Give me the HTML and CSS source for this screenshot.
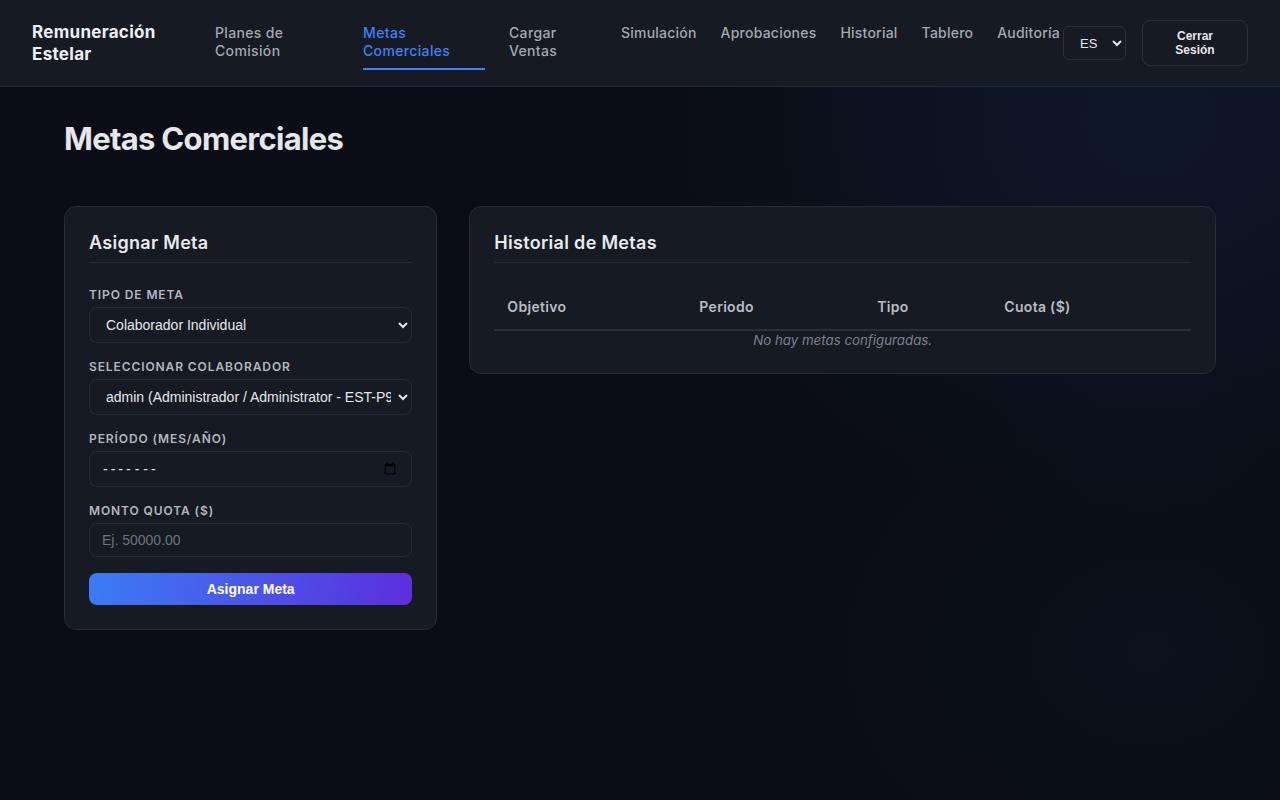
FILE: index.html
```html
<!DOCTYPE html>
<html lang="es">
<head>
<meta charset="utf-8">
<title>Metas Comerciales</title>
<link rel="stylesheet" href="styles.css">
</head>
<body>
<header class="topbar">
  <div class="brand">Remuneración Estelar</div>
  <nav class="nav">
    <a class="nav-link nl-planes">Planes de Comisión</a>
    <a class="nav-link nl-metas active">Metas Comerciales</a>
    <a class="nav-link nl-cargar">Cargar Ventas</a>
    <a class="nav-link">Simulación</a>
    <a class="nav-link">Aprobaciones</a>
    <a class="nav-link">Historial</a>
    <a class="nav-link">Tablero</a>
    <a class="nav-link">Auditoría</a>
  </nav>
  <div class="actions">
    <select class="lang"><option>ES</option><option>EN</option></select>
    <button class="logout">Cerrar Sesión</button>
  </div>
</header>
<main class="page">
  <h1 class="page-title">Metas Comerciales</h1>
  <div class="grid">
    <section class="card">
      <h2 class="card-title">Asignar Meta</h2>
      <form class="form">
        <div class="field">
          <label class="label">Tipo de Meta</label>
          <select class="control"><option>Colaborador Individual</option></select>
        </div>
        <div class="field">
          <label class="label">Seleccionar Colaborador</label>
          <select class="control"><option>admin (Administrador / Administrator - EST-P93)</option></select>
        </div>
        <div class="field">
          <label class="label">Período (Mes/Año)</label>
          <input class="control date" type="month">
        </div>
        <div class="field">
          <label class="label">Monto Quota ($)</label>
          <input class="control text" type="text" placeholder="Ej. 50000.00">
        </div>
        <button type="button" class="submit">Asignar Meta</button>
      </form>
    </section>
    <section class="card card-wide">
      <h2 class="card-title">Historial de Metas</h2>
      <table class="table">
        <thead>
          <tr><th class="c1">Objetivo</th><th class="c2">Periodo</th><th class="c3">Tipo</th><th class="c4">Cuota ($)</th></tr>
        </thead>
        <tbody>
          <tr><td class="empty" colspan="4">No hay metas configuradas.</td></tr>
        </tbody>
      </table>
    </section>
  </div>
</main>
</body>
</html>
```
FILE: styles.css
```css
* { box-sizing: border-box; }
html, body { height: 100%; }
body {
  margin: 0;
  font-family: Inter, "Noto Sans", sans-serif;
  color: #e5e7eb;
  background-color: #0a0d15;
  background-image:
    radial-gradient(ellipse 700px 600px at 1150px 120px, rgba(30, 58, 120, 0.22), rgba(10, 13, 21, 0) 70%),
    radial-gradient(ellipse 500px 400px at 1150px 650px, rgba(30, 50, 100, 0.10), rgba(10, 13, 21, 0) 70%);
  min-height: 800px;
}

.topbar {
  height: 87px;
  display: flex;
  align-items: center;
  padding: 0 32px;
  background: #161a23;
  border-bottom: 1px solid #242a35;
}
.brand {
  width: 140px;
  flex-shrink: 0;
  margin-right: 43px;
  font-size: 17px;
  font-weight: 700;
  line-height: 22px;
  color: #eef0f4;
  letter-spacing: 0.3px;
}
.nav {
  flex: 1;
  display: flex;
  gap: 24px;
  align-self: stretch;
  align-items: flex-start;
  padding-top: 24px;
  min-width: 0;
}
.nav-link {
  flex-shrink: 0;
  font-size: 14px;
  font-weight: 500;
  line-height: 18px;
  letter-spacing: 0.22px;
  color: #a3a8b3;
  white-space: nowrap;
  padding-bottom: 8px;
  border-bottom: 2px solid transparent;
  cursor: pointer;
}
.nl-planes, .nl-metas, .nl-cargar { white-space: normal; letter-spacing: 0.35px; }
.nl-planes { width: 124px; }
.nl-metas { width: 122px; }
.nl-cargar { width: 88px; }
.nav-link.active {
  color: #3b82f6;
  border-bottom-color: #3b82f6;
}
.actions {
  display: flex;
  align-items: center;
  gap: 16px;
  flex-shrink: 0;
}
.lang {
  width: 63px;
  height: 34px;
  padding: 0 8px 0 12px;
  background: #161a23;
  color: #e5e7eb;
  border: 1px solid #2a303b;
  border-radius: 6px;
  font-family: "Liberation Sans", Arial, sans-serif;
  font-size: 13px;
}
.logout {
  width: 106px;
  height: 46px;
  padding: 0 28px;
  background: #161a23;
  color: #e5e7eb;
  border: 1px solid #2a303b;
  border-radius: 8px;
  font-family: "Liberation Sans", Arial, sans-serif;
  font-size: 12px;
  font-weight: 700;
  line-height: 14px;
}

.page {
  padding: 31px 64px 32px;
}
.page-title {
  margin: 0 0 46px;
  font-size: 31px;
  font-weight: 700;
  line-height: 42px;
  color: #e5e7eb;
  letter-spacing: -0.7px;
}
.grid {
  display: grid;
  grid-template-columns: 1fr 2fr;
  gap: 32px;
  align-items: start;
}
.card {
  background: #161a23;
  border: 1px solid #262b36;
  border-radius: 12px;
  padding: 24px;
}
.card-title {
  margin: 0 0 24px;
  padding: 0 0 7px;
  font-size: 18px;
  font-weight: 600;
  line-height: 24px;
  letter-spacing: 0.3px;
  color: #e8eaee;
  border-bottom: 1px solid #262b36;
}

.field { margin-bottom: 16px; }
.label {
  display: block;
  margin-bottom: 5px;
  font-size: 12px;
  font-weight: 600;
  line-height: 15px;
  letter-spacing: 0.9px;
  text-transform: uppercase;
  color: #b3b7c0;
}
.control {
  display: block;
  width: 100%;
  height: 36px;
  padding: 0 4px 0 12px;
  background: #161a23;
  color: #e5e7eb;
  border: 1px solid #262b36;
  border-radius: 8px;
  font-family: "Liberation Sans", Arial, sans-serif;
  font-size: 14px;
}
.control.text { height: 34px; }
.control::placeholder { color: #6b7280; }
.control.date { color-scheme: light; color: #e5e7eb; letter-spacing: 3px; padding-right: 12px; }
.submit {
  display: block;
  width: 100%;
  height: 32px;
  border: 0;
  border-radius: 8px;
  background: linear-gradient(100deg, #3b7cf3 0%, #5b2fdc 100%);
  color: #ffffff;
  font-family: "Liberation Sans", Arial, sans-serif;
  font-size: 14px;
  font-weight: 700;
}

.table {
  width: 100%;
  border-collapse: collapse;
}
.table th {
  text-align: left;
  padding: 10px 12px 12px 13px;
  font-size: 14px;
  font-weight: 600;
  line-height: 20px;
  letter-spacing: 0.3px;
  color: #b8bcc5;
  border-bottom: 2px solid #2a303b;
}
.c1 { width: 192px; }
.c2 { width: 178px; }
.c3 { width: 127px; }
.table td.empty {
  padding: 0;
  text-align: center;
  font-size: 13.3px;
  font-style: italic;
  line-height: 18px;
  color: #7b8190;
}
```
